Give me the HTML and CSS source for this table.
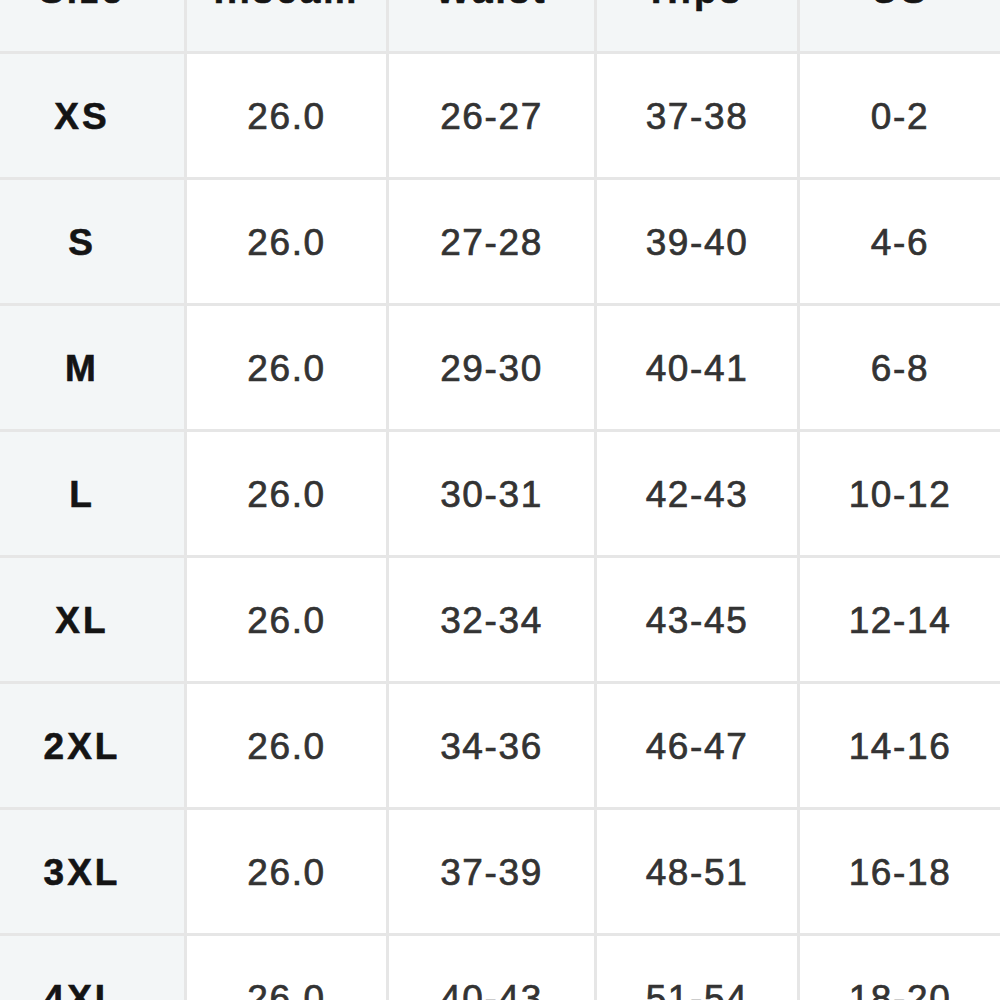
FILE: index.html
```html
<!DOCTYPE html>
<html>
<head>
<meta charset="utf-8">
<link rel="stylesheet" href="styles.css">
</head>
<body>
<div class="chart">
  <div class="cell head first">Size</div><div class="cell head">Inseam</div><div class="cell head">Waist</div><div class="cell head">Hips</div><div class="cell head">US</div>
  <div class="cell size">XS</div><div class="cell">26.0</div><div class="cell">26-27</div><div class="cell">37-38</div><div class="cell">0-2</div>
  <div class="cell size">S</div><div class="cell">26.0</div><div class="cell">27-28</div><div class="cell">39-40</div><div class="cell">4-6</div>
  <div class="cell size">M</div><div class="cell">26.0</div><div class="cell">29-30</div><div class="cell">40-41</div><div class="cell">6-8</div>
  <div class="cell size">L</div><div class="cell">26.0</div><div class="cell">30-31</div><div class="cell">42-43</div><div class="cell">10-12</div>
  <div class="cell size">XL</div><div class="cell">26.0</div><div class="cell">32-34</div><div class="cell">43-45</div><div class="cell">12-14</div>
  <div class="cell size">2XL</div><div class="cell">26.0</div><div class="cell">34-36</div><div class="cell">46-47</div><div class="cell">14-16</div>
  <div class="cell size">3XL</div><div class="cell">26.0</div><div class="cell">37-39</div><div class="cell">48-51</div><div class="cell">16-18</div>
  <div class="cell size">4XL</div><div class="cell">26.0</div><div class="cell">40-43</div><div class="cell">51-54</div><div class="cell">18-20</div>
</div>
</body>
</html>
```
FILE: styles.css
```css
html, body {
  margin: 0;
  padding: 0;
  background: #ffffff;
  overflow: hidden;
}
.chart {
  display: grid;
  grid-template-columns: 184px 199px 205px 200px 1fr;
  grid-auto-rows: 123px;
  gap: 3px;
  background: #e6e6e6;
  margin-top: -72px;
  width: 1000px;
  font-family: "Liberation Sans", Arial, sans-serif;
}
.cell {
  background: #ffffff;
  display: flex;
  align-items: center;
  justify-content: center;
  padding-top: 3px;
  font-size: 37px;
  letter-spacing: 1.6px;
  color: #333333;
  -webkit-text-stroke: 0.7px #333333;
}
.head, .size {
  background: #f3f6f7;
  font-weight: bold;
  color: #141414;
  letter-spacing: 3px;
  -webkit-text-stroke: 0.6px #141414;
}
.size, .first {
  padding-right: 20px;
}
```
